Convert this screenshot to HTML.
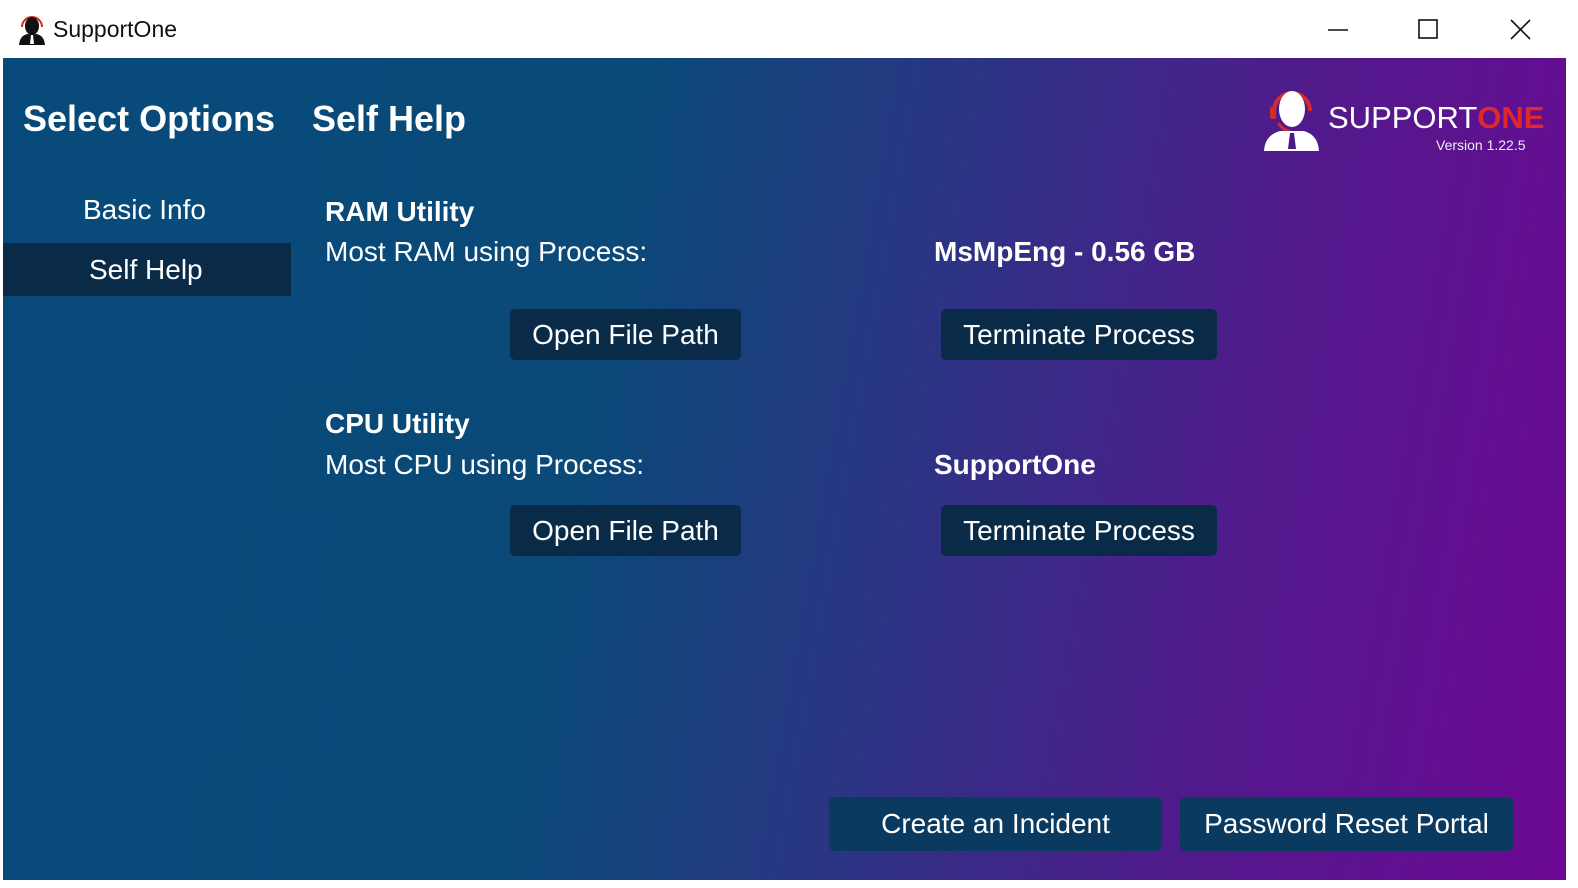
<!DOCTYPE html>
<html><head><style>
*{margin:0;padding:0;box-sizing:border-box}
body{width:1578px;height:888px;background:#fff;font-family:"Liberation Sans",sans-serif;position:relative;overflow:hidden}
.title{position:absolute;left:53px;top:16px;font-size:23px;color:#111}
.main{position:absolute;left:3px;top:58px;width:1563px;height:822px;background:linear-gradient(100deg,#074a7a 0%,#0a4978 38%,#2d3384 58%,#52198c 78%,#6c0893 100%)}
.t{position:absolute;color:#fff;white-space:nowrap}
.h{font-weight:bold;font-size:36px}
.btn{position:absolute;background:#0a2b48;border-radius:5px;color:#fff;font-size:28px;display:flex;align-items:center;justify-content:center}
</style></head><body>
<svg style="position:absolute;left:18px;top:13px" width="28" height="32" viewBox="0 0 28 32"><path d="M4 14a10 10 0 0 1 20 0" fill="none" stroke="#d22" stroke-width="2"/><ellipse cx="14" cy="13" rx="7" ry="9" fill="#111"/><path d="M1 32 Q2 22 10 21 L18 21 Q26 22 27 32Z" fill="#111"/><path d="M13 22h2l1 9h-4z" fill="#fff"/></svg>
<div class="title">SupportOne</div>
<svg style="position:absolute;left:1328px;top:20px" width="20" height="20"><path d="M0 10h20" stroke="#111" stroke-width="1.5"/></svg>
<svg style="position:absolute;left:1418px;top:19px" width="20" height="20"><rect x="1" y="1" width="18" height="18" fill="none" stroke="#111" stroke-width="1.6"/></svg>
<svg style="position:absolute;left:1510px;top:19px" width="21" height="21"><path d="M1 1L20 20M20 1L1 20" stroke="#111" stroke-width="1.6"/></svg>
<div class="main">
<div class="t h" style="left:20px;top:40px">Select Options</div>
<div class="t h" style="left:309px;top:40px">Self Help</div>
<div class="t" style="left:80px;top:136px;font-size:28px">Basic Info</div>
<div style="position:absolute;left:0;top:185px;width:288px;height:53px;background:#0a2b48"></div>
<div class="t" style="left:86px;top:196px;font-size:28px">Self Help</div>
<div class="t" style="left:322px;top:138px;font-size:28px;font-weight:bold">RAM Utility</div>
<div class="t" style="left:322px;top:178px;font-size:28px">Most RAM using Process:</div>
<div class="t" style="left:931px;top:178px;font-size:28px;font-weight:bold">MsMpEng - 0.56 GB</div>
<div class="btn" style="left:507px;top:251px;width:231px;height:51px">Open File Path</div>
<div class="btn" style="left:938px;top:251px;width:276px;height:51px">Terminate Process</div>
<div class="t" style="left:322px;top:350px;font-size:28px;font-weight:bold">CPU Utility</div>
<div class="t" style="left:322px;top:391px;font-size:28px">Most CPU using Process:</div>
<div class="t" style="left:931px;top:391px;font-size:28px;font-weight:bold">SupportOne</div>
<div class="btn" style="left:507px;top:447px;width:231px;height:51px">Open File Path</div>
<div class="btn" style="left:938px;top:447px;width:276px;height:51px">Terminate Process</div>
<div class="btn" style="left:826px;top:739px;width:333px;height:54px;background:#0a3a60">Create an Incident</div>
<div class="btn" style="left:1177px;top:739px;width:333px;height:54px;background:#0a3a60">Password Reset Portal</div>
<svg style="position:absolute;left:1259px;top:27px" width="60" height="68" viewBox="0 0 60 68"><path d="M12 26a18 18 0 0 1 36 0" fill="none" stroke="#d42a2a" stroke-width="4"/><rect x="8" y="22" width="6" height="12" rx="2" fill="#d42a2a"/><ellipse cx="30" cy="24" rx="13" ry="18" fill="#fff"/><path d="M16 38 Q22 46 28 46" fill="none" stroke="#d42a2a" stroke-width="3"/><path d="M2 66 Q3 50 18 46 L42 46 Q56 50 57 66Z" fill="#fff"/><path d="M28 48h4l2 16h-8z" fill="#4a1a8a"/></svg>
<div class="t" style="left:1325px;top:42px;font-size:31px;letter-spacing:0">SUPPORT<span style="color:#e0282a;font-weight:bold">ONE</span></div>
<div class="t" style="left:1433px;top:79px;font-size:14px;color:#eee">Version 1.22.5</div>
</div>
</body></html>
